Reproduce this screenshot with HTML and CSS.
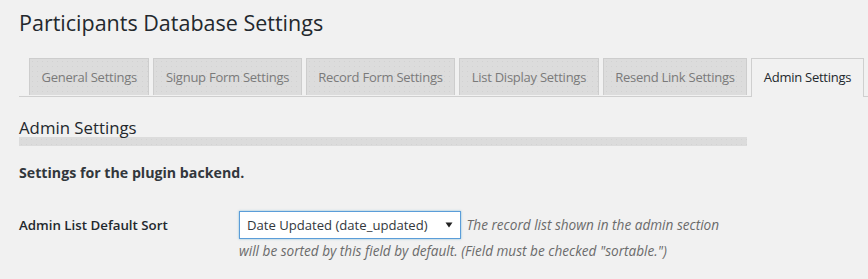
FILE: index.html
```html
<!DOCTYPE html>
<html lang="en">
<head>
<meta charset="utf-8">
<title>Participants Database Settings</title>
<link rel="stylesheet" href="styles.css">
</head>
<body>
<div class="wrap">
  <h1 class="page-title">Participants Database Settings</h1>
  <nav class="tabs">
    <a class="tab">General Settings</a>
    <a class="tab">Signup Form Settings</a>
    <a class="tab">Record Form Settings</a>
    <a class="tab">List Display Settings</a>
    <a class="tab">Resend Link Settings</a>
    <a class="tab tab-active">Admin Settings</a>
  </nav>
  <section class="section">
    <h2 class="section-title">Admin Settings</h2>
    <p class="section-intro">Settings for the plugin backend.</p>
    <div class="field-row">
      <label class="field-label">Admin List Default Sort</label>
      <div class="field-control">
        <span class="select"><span class="select-value">Date Updated (date_updated)</span><svg class="select-arrow" width="8" height="6" viewBox="0 0 8 6"><path d="M0.5 0.5 H7.5 L4 5.5 Z" fill="#222"/></svg></span>
        <span class="description">The record list shown in the admin section<br>will be sorted by this field by default. (Field must be checked "sortable.")</span>
      </div>
    </div>
  </section>
</div>
</body>
</html>
```
FILE: styles.css
```css
html, body {
  margin: 0;
  padding: 0;
  background: #f1f1f1;
}
body {
  font-family: "Open Sans", "Noto Sans", sans-serif;
  color: #23282d;
}
.wrap {
  padding: 8px 0 0 19px;
}
.page-title {
  margin: 0;
  font-size: 21.5px;
  line-height: 29px;
  font-weight: 400;
  color: #23282d;
}
.tabs {
  display: flex;
  align-items: flex-end;
  gap: 4px;
  margin-top: 21px;
  padding-left: 10px;
  border-bottom: 1px solid #cfcfcf;
}
.tab {
  display: block;
  box-sizing: border-box;
  height: 37px;
  margin-bottom: 1px;
  padding: 8px 11.5px 0;
  border: 1px solid #cdcdcd;
  border-bottom: none;
  font-size: 13px;
  line-height: 20px;
  letter-spacing: -0.25px;
  color: #7a7a7a;
  background-color: #dcdcdc;
  background-image: radial-gradient(circle, #d2d2d2 0.7px, transparent 0.9px);
  background-size: 5px 5px;
  white-space: nowrap;
}
.tab-active {
  height: 39px;
  margin-bottom: -1px;
  color: #23282d;
  background: #f1f1f1;
  border-color: #cfcfcf;
}
.section {
  width: 728px;
  margin-top: 21px;
}
.section-title {
  margin: 0;
  font-size: 16.8px;
  line-height: 19px;
  font-weight: 400;
  color: #23282d;
}
.section-title::after {
  content: "";
  display: block;
  height: 9px;
  background-color: #dcdcdc;
  background-image: radial-gradient(circle, #d3d3d3 0.7px, transparent 0.9px);
  background-size: 5px 5px;
}
.section-intro {
  margin: 17px 0 0;
  font-size: 14.2px;
  line-height: 20px;
  font-weight: 700;
  color: #32373c;
}
.field-row {
  display: grid;
  grid-template-columns: 220px 1fr;
  align-items: baseline;
  margin-top: 28px;
}
.field-label {
  font-size: 13.3px;
  font-weight: 600;
  color: #23282d;
}
.field-control {
  font-size: 13.6px;
  line-height: 24px;
}
.select {
  display: inline-flex;
  align-items: center;
  box-sizing: border-box;
  width: 222px;
  height: 28px;
  padding: 0 7px 0 7px;
  border: 1px solid #5b9dd9;
  box-shadow: 0 0 2px rgba(30, 140, 190, 0.5);
  background: #fff;
  color: #32373c;
  font-size: 13.1px;
  line-height: 20px;
  vertical-align: baseline;
}
.select-value {
  flex: 1;
  white-space: nowrap;
}
.select-arrow {
  display: block;
  margin-left: 6px;
}
.description {
  margin-left: 2px;
  font-style: italic;
  color: #6b6b6b;
}
```
